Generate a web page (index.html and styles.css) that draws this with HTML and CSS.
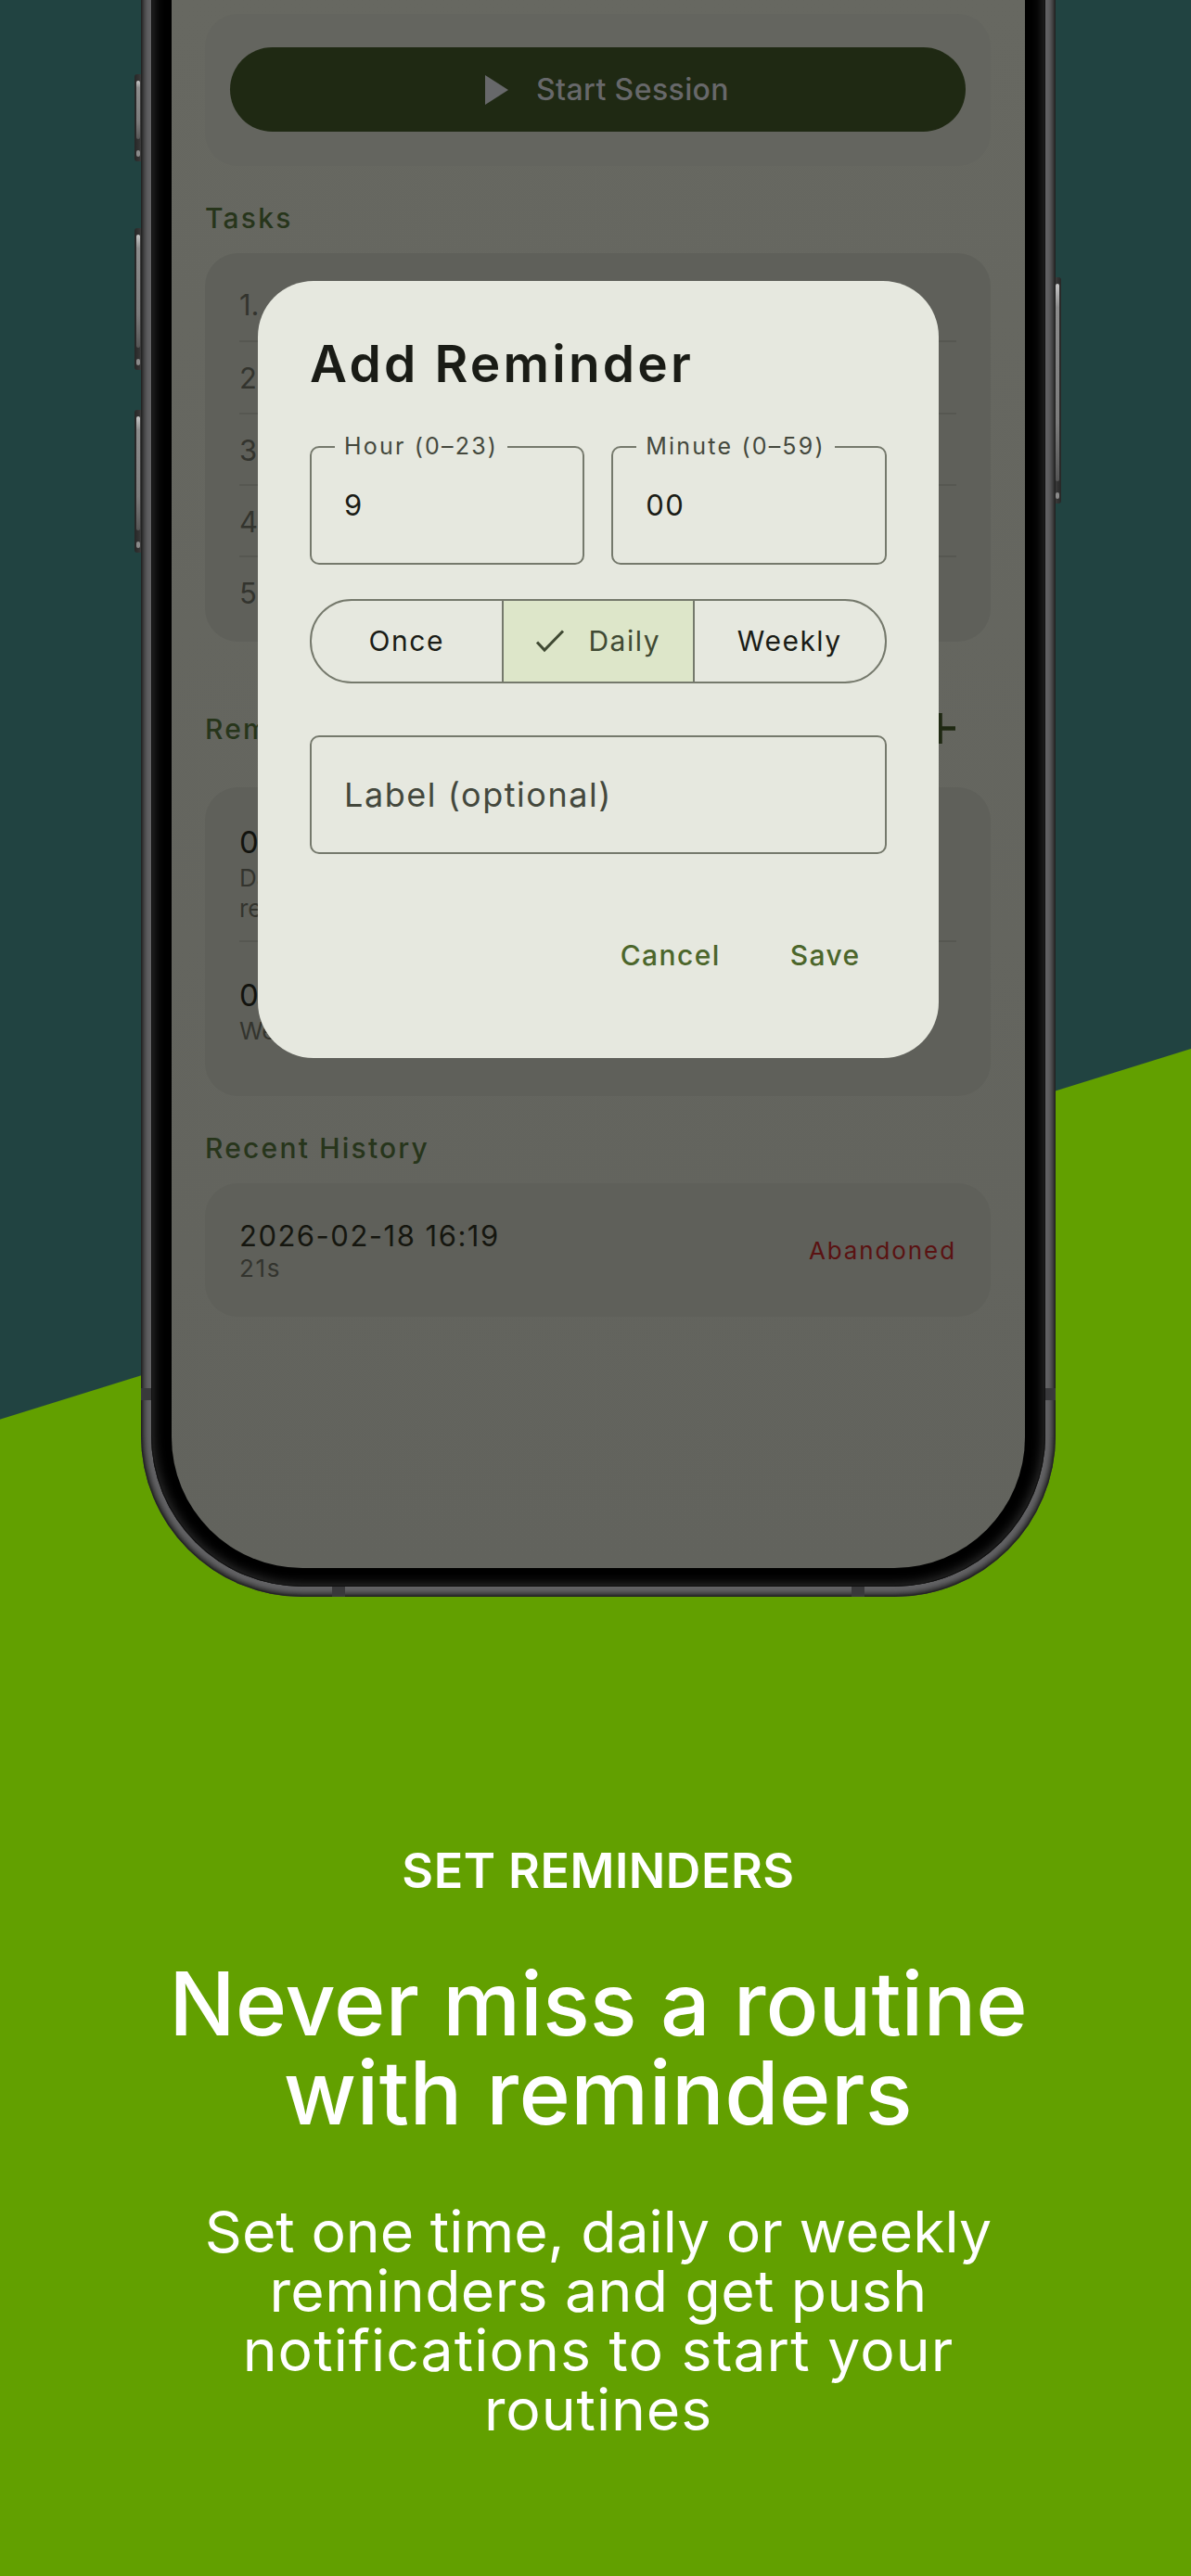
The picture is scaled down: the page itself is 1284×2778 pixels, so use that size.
FILE: index.html
```html
<!DOCTYPE html>
<html lang="en">
<head>
<meta charset="utf-8">
<title>Set reminders</title>
<link rel="stylesheet" href="styles.css">
</head>
<body>
<main class="canvas">
  <div class="phone">
    <span class="side side-a"></span>
    <span class="side side-b"></span>
    <span class="side side-c"></span>
    <span class="side side-r"></span>
    <span class="seam seam-left"></span>
    <span class="seam seam-right"></span>
    <span class="seam-h seam-bl"></span>
    <span class="seam-h seam-br"></span>
    <div class="bezel">
      <div class="screen">
        <section class="card card-start">
          <div class="start-pill">
            <svg class="play" viewBox="0 0 25 32" aria-hidden="true"><path d="M0 0 25 16 0 32Z"/></svg>
            <span>Start Session</span>
          </div>
        </section>

        <h2 class="section-title">Tasks</h2>
        <section class="card card-tasks">
          <div class="task">1.</div>
          <div class="task">2.</div>
          <div class="task">3.</div>
          <div class="task">4.</div>
          <div class="task">5.</div>
        </section>

        <div class="section-head">
          <h2 class="section-title-inline">Rem</h2>
          <svg class="plus" viewBox="0 0 33 33" aria-hidden="true"><path d="M16.500 0v33M0 16.500h33"/></svg>
        </div>
        <section class="card card-reminders">
          <div class="reminder">
            <div class="reminder-time">09</div>
            <div class="reminder-sub">Da<br>re</div>
          </div>
          <div class="reminder reminder-next">
            <div class="reminder-time">07</div>
            <div class="reminder-sub">We</div>
          </div>
        </section>

        <h2 class="section-title">Recent History</h2>
        <section class="card card-history">
          <div class="history-main">
            <div class="history-date">2026-02-18 16:19</div>
            <div class="history-length">21s</div>
          </div>
          <div class="history-status">Abandoned</div>
        </section>

        <div class="dialog">
          <h1 class="dialog-title">Add Reminder</h1>
          <div class="time-row">
            <div class="field">
              <span class="field-label">Hour (0–23)</span>
              <span class="field-value">9</span>
            </div>
            <div class="field">
              <span class="field-label">Minute (0–59)</span>
              <span class="field-value">00</span>
            </div>
          </div>
          <div class="segments">
            <div class="segment">Once</div>
            <div class="segment segment-on">
              <svg class="check" viewBox="0 0 32 26" aria-hidden="true"><path d="M2 14.500 10 23 30 2.500"/></svg>
              <span>Daily</span>
            </div>
            <div class="segment">Weekly</div>
          </div>
          <div class="field field-label-input">
            <span class="field-placeholder">Label (optional)</span>
          </div>
          <div class="actions">
            <span class="action">Cancel</span>
            <span class="action">Save</span>
          </div>
        </div>
      </div>
    </div>
  </div>

  <section class="copy">
    <p class="eyebrow">SET REMINDERS</p>
    <h2 class="headline">Never miss a routine<br><span class="headline-second">with reminders</span></h2>
    <p class="lede">Set one time, daily or weekly<br><span class="lede-b">reminders and get push</span><br><span class="lede-c">notifications to start your</span><br><span class="lede-d">routines</span></p>
  </section>
</main>
</body>
</html>
```

FILE: styles.css
```css
* { box-sizing: border-box; }
html, body { margin: 0; padding: 0; }
body {
  width: 1284px;
  height: 2778px;
  overflow: hidden;
  font-family: Inter, "Liberation Sans", sans-serif;
}
h1, h2, p { margin: 0; font-weight: 400; }

.canvas {
  width: 1284px;
  height: 2778px;
  overflow: hidden;
  background: linear-gradient(162.71deg, #214341 1461px, #62a000 1462px);
}

/* device */
.phone {
  position: relative;
  display: flex;
  flex-direction: column;
  width: 986px;
  height: 1762px;
  margin: -40px 0 0 152px;
  padding: 11px;
  border-radius: 0 0 174px 174px;
  background: #626264;
  box-shadow: inset 0 0 2px 1px #1e1e1e, inset 0 0 5px 4px #2e2e2e;
}
.bezel {
  flex: 1;
  display: flex;
  flex-direction: column;
  padding: 22px 22px 20px;
  border-radius: 0 0 163px 163px;
  background: #000;
  box-shadow: inset 0 0 0 1px #101010, inset 0 0 12px 3px #2e2e2e;
}
.screen {
  position: relative;
  flex: 1;
  padding: 22px 37px 0 36px;
  border-radius: 0 0 141px 141px;
  background: linear-gradient(#676861, #62635d);
  overflow: hidden;
}
.side {
  position: absolute;
  left: -7px;
  width: 7px;
  border-radius: 3px 0 0 3px;
  background: linear-gradient(90deg, #262626, #3a3a3a);
}
.side::before {
  content: "";
  position: absolute;
  top: 7px;
  bottom: 24px;
  left: 2px;
  width: 4px;
  border-radius: 2px;
  background: linear-gradient(#c8c8c8, #8c8c8c 12%, #7c7c7c 70%, #555);
}
.side::after {
  content: "";
  position: absolute;
  bottom: 5px;
  left: 2px;
  width: 4px;
  height: 7px;
  border-radius: 2px;
  background: #8a8a8a;
}
.side-a { top: 120px; height: 94px; }
.side-b { top: 286px; height: 153px; }
.side-c { top: 482px; height: 154px; }
.side-r {
  left: auto;
  right: -6px;
  top: 339px;
  width: 6px;
  height: 244px;
  border-radius: 0 3px 3px 0;
  background: linear-gradient(270deg, #262626, #3a3a3a);
}
.side-r::before, .side-r::after { left: 0; }
.seam { position: absolute; top: 1537px; width: 11px; height: 13px; background: #39393b; }
.seam-left { left: 0; }
.seam-right { right: 0; }
.seam-h { position: absolute; bottom: 0; width: 14px; height: 11px; background: #39393b; }
.seam-bl { left: 206px; }
.seam-br { right: 206px; }

/* app behind the dialog */
.card {
  border-radius: 36px;
  background: #5f605a;
}
.card-start {
  height: 164px;
  padding: 36px 27px;
  background: #64655f;
}
.start-pill {
  display: flex;
  align-items: center;
  justify-content: center;
  gap: 30px;
  height: 91px;
  padding-left: 20px;
  border-radius: 46px;
  background: #1f2913;
  color: #67686a;
  font-size: 32px;
  font-weight: 500;
  letter-spacing: 0.400px;
}
.play { width: 25px; height: 32px; fill: #67686a; }
.section-title, .section-title-inline {
  color: #27351b;
  font-size: 30px;
  line-height: 40px;
  font-weight: 500;
  letter-spacing: 2.200px;
}
.section-title { padding: 36px 0 18px; }
.section-head {
  display: flex;
  align-items: center;
  justify-content: space-between;
  height: 157px;
  padding: 52px 38px 0 0;
}
.section-head .section-title-inline { margin-top: -22px; }
.plus { width: 33px; height: 33px; margin-top: -23px; fill: none; stroke: #1f2913; stroke-width: 4.500; }
.card-tasks { height: 419px; padding: 17px 37px 16px; }
.task {
  height: 77.300px;
  line-height: 77px;
  font-size: 31px;
  color: #33342e;
  border-top: 2px solid #565751;
}
.task:first-child { border-top: 0; }
.card-reminders { height: 333px; padding: 0 37px; }
.reminder { padding: 37px 0 18px; }
.reminder-next { padding-top: 35px; border-top: 2px solid #565751; }
.reminder-time { font-size: 33px; line-height: 44px; color: #12130e; }
.reminder-sub { font-size: 26px; line-height: 33px; color: #33342e; }
.card-history {
  display: flex;
  align-items: center;
  justify-content: space-between;
  height: 144px;
  padding: 0 37px;
}
.history-main { margin-top: -4px; }
.history-date { font-size: 31px; line-height: 44px; letter-spacing: 1.500px; color: #15160f; }
.history-length { font-size: 26px; line-height: 26px; letter-spacing: 1.600px; color: #33342e; }
.history-status {
  font-size: 26px;
  font-weight: 400;
  letter-spacing: 1.900px;
  color: #5a1212;
}

/* dialog */
.dialog {
  position: absolute;
  top: 310px;
  left: 93px;
  width: 733.500px;
  height: 838px;
  padding: 53px 56px 0;
  border-radius: 60px;
  background: #e6e8df;
}
.dialog-title {
  font-size: 55px;
  line-height: 72px;
  font-weight: 600;
  letter-spacing: 3.200px;
  color: #1a1c16;
}
.time-row { display: flex; gap: 29px; margin-top: 53px; }
.field {
  position: relative;
  flex: 1;
  display: flex;
  align-items: center;
  height: 127.500px;
  padding: 0 35px;
  border: 2.500px solid #75796c;
  border-radius: 10px;
}
.field-label {
  position: absolute;
  top: -17.500px;
  left: 25px;
  padding: 0 10px;
  background: #e6e8df;
  color: #44483d;
  font-size: 25px;
  line-height: 30px;
  letter-spacing: 2.200px;
}
.field-value { font-size: 31px; letter-spacing: 1.500px; color: #1a1c16; }
.segments {
  display: flex;
  height: 90.500px;
  margin-top: 37.500px;
  border: 2.500px solid #75796c;
  border-radius: 45px;
  overflow: hidden;
}
.segment {
  flex: 1;
  display: flex;
  align-items: center;
  justify-content: center;
  gap: 25px;
  font-size: 30px;
  font-weight: 400;
  letter-spacing: 1.500px;
  color: #1a1c16;
}
.segment + .segment { border-left: 2.500px solid #75796c; }
.segment-on { background: #dde6c9; color: #404a33; }
.check { width: 32px; height: 26px; fill: none; stroke: #404a33; stroke-width: 3; }
.field-label-input { flex: none; margin-top: 56.500px; }
.field-placeholder { font-size: 36px; letter-spacing: 1.550px; color: #44483d; }
.actions {
  display: flex;
  justify-content: flex-end;
  gap: 75px;
  margin: 79.500px 28px 0 0;
  line-height: 60px;
}
.action { font-size: 30px; font-weight: 450; letter-spacing: 1.400px; color: #4c662b; }

/* marketing copy */
.copy {
  width: 1000px;
  margin-left: 145px;
  padding-top: 263px;
  text-align: center;
  color: #fff;
}
.eyebrow { font-size: 52px; line-height: 66px; font-weight: 600; letter-spacing: 0.500px; }
.headline { margin-top: 62px; font-size: 94.500px; line-height: 96px; font-weight: 500; }
.headline-second { letter-spacing: 0.400px; }
.lede { margin-top: 69px; font-size: 62.500px; line-height: 64px; }
.lede-b { letter-spacing: 0.400px; }
.lede-c { letter-spacing: 1.050px; }
.lede-d { letter-spacing: 0.900px; }
```
